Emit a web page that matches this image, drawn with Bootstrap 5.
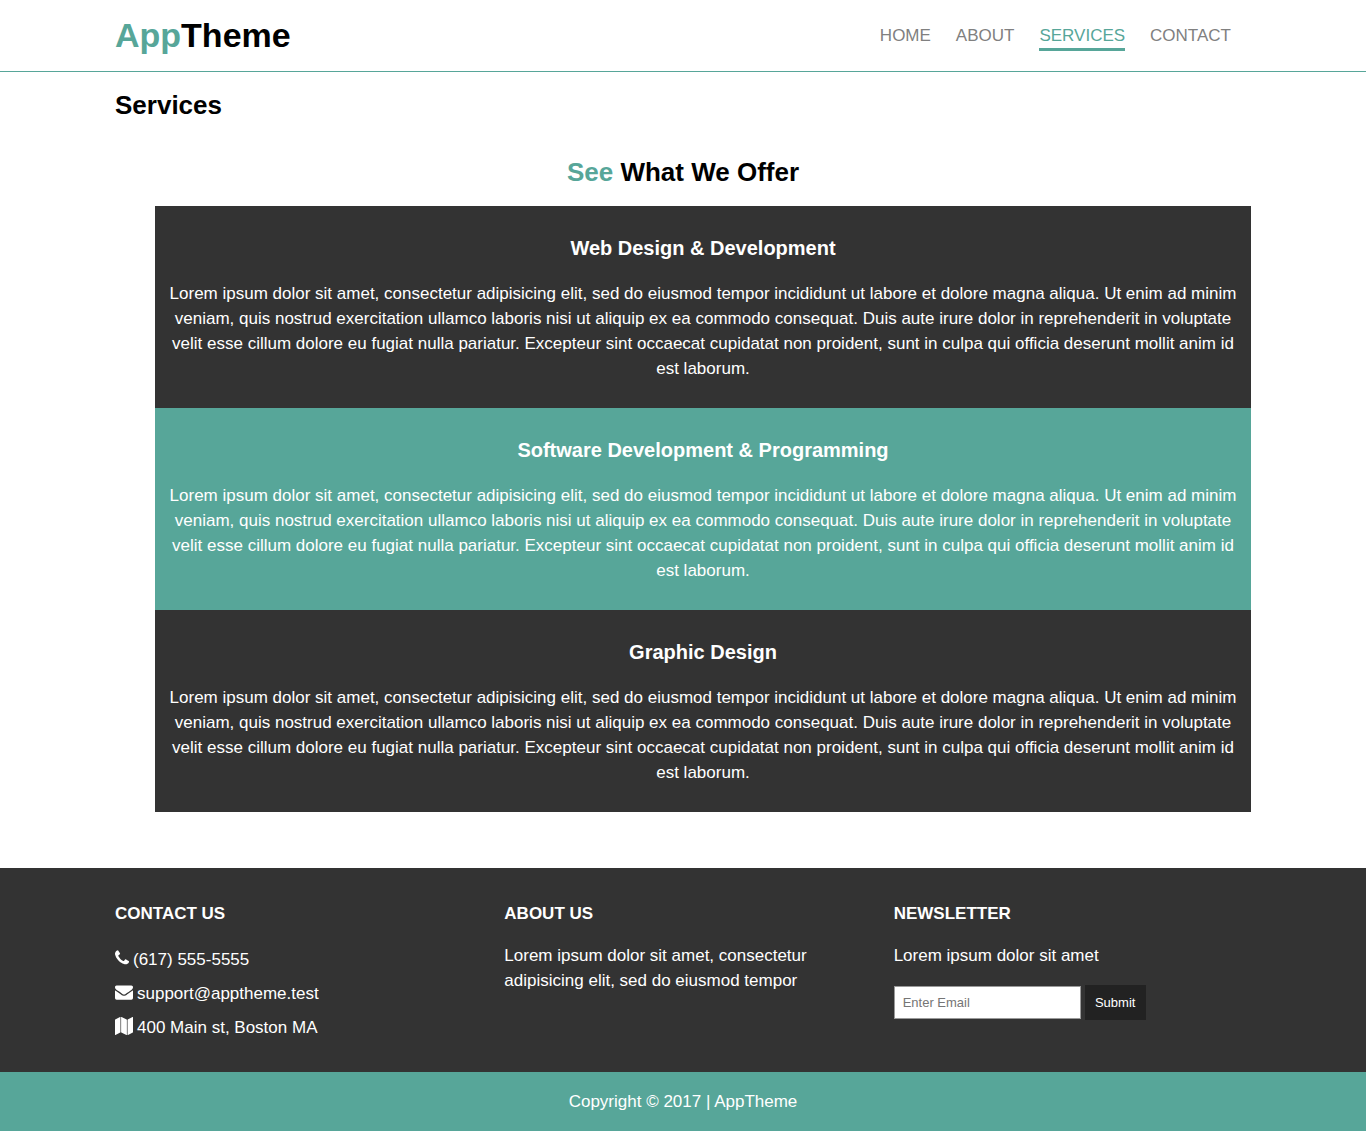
<!DOCTYPE html>
<html lang="en">
<head>
<meta charset="utf-8">
<meta name="viewport" content="width=device-width, initial-scale=1">
<title>AppTheme | Services</title>
<link href="https://cdn.jsdelivr.net/npm/bootstrap@5.3.0/dist/css/bootstrap.min.css" rel="stylesheet">
<style>
:root { --theme: #57a699; --dark: #333; }
body { font-family: "Liberation Sans", Arial, sans-serif; font-size: 17px; line-height: 25px; color: #000; }
.wrap { max-width: 1160px; padding-left: 12px; padding-right: 12px; }
.text-theme { color: var(--theme); }
.bg-theme { background: var(--theme); }
.bg-ink { background: var(--dark); }
.site-header { border-bottom: 1px solid var(--theme); padding: 10px 0; }
.brand { font-size: 34px; line-height: 51px; }
.brand, .heading { font-weight: 700; }
.menu { gap: 25px; padding-right: 20px; }
.menu .nav-link { padding: 0; color: #808080; border: solid transparent; border-width: 3px 0; text-transform: uppercase; }
.menu .nav-link:hover, .menu .nav-link.active { color: var(--theme); }
.menu .nav-link.active { border-bottom-color: var(--theme); }
.content { padding-top: 14px; padding-bottom: 56px; }
.heading { font-size: 26px; line-height: 39px; }
.page-title { margin-bottom: 28px; }
.offer-title { margin-bottom: 14px; }
.services { padding-left: 40px; }
.service { padding: 27px 14px; }
.service h3 { font-size: 20px; line-height: 30px; font-weight: 700; margin-bottom: 18px; }
.site-footer { padding: 33px 0 27px; }
.site-footer .row { --bs-gutter-x: 32px; }
.site-footer h4 { font-size: 17px; line-height: 25px; font-weight: 700; margin-bottom: 17px; text-transform: uppercase; }
.site-footer p, .signup-text { margin-bottom: 17px; }
.contacts li { gap: 4px; height: 34px; padding-bottom: 2px; }
.contacts svg { height: 18px; margin-bottom: 2px; fill: #fff; }
.signup { gap: 4px; }
.signup .form-control { width: 187px; height: 33px; padding: 0 8px; font-size: 13px; border: 1px solid #999; border-radius: 0; color: #000; }
.signup .form-control::placeholder { color: #757575; }
.signup .btn { height: 35px; min-width: 61px; padding: 0 10px; font-size: 13px; line-height: 20px; border: 0; border-radius: 0; background: #222; color: #fff; }
.copyright { padding: 17px 0; }
</style>
</head>
<body>
<header class="site-header">
  <div class="container-fluid wrap d-flex flex-wrap justify-content-between align-items-center">
    <h1 class="brand m-0"><span class="text-theme">App</span>Theme</h1>
    <nav aria-label="Main">
      <ul class="nav menu">
        <li class="nav-item"><a class="nav-link" href="#">Home</a></li>
        <li class="nav-item"><a class="nav-link" href="#">About</a></li>
        <li class="nav-item"><a class="nav-link active" aria-current="page" href="#">Services</a></li>
        <li class="nav-item"><a class="nav-link" href="#">Contact</a></li>
      </ul>
    </nav>
  </div>
</header>

<main class="container-fluid wrap content">
  <h2 class="heading page-title">Services</h2>
  <h2 class="heading offer-title text-center"><span class="text-theme">See</span> What We Offer</h2>
  <ul class="services list-unstyled text-center text-white m-0">
    <li class="service bg-ink">
      <h3>Web Design &amp; Development</h3>
      <p class="m-0">Lorem ipsum dolor sit amet, consectetur adipisicing elit, sed do eiusmod tempor incididunt ut labore et dolore magna aliqua. Ut enim ad minim veniam, quis nostrud exercitation ullamco laboris nisi ut aliquip ex ea commodo consequat. Duis aute irure dolor in reprehenderit in voluptate velit esse cillum dolore eu fugiat nulla pariatur. Excepteur sint occaecat cupidatat non proident, sunt in culpa qui officia deserunt mollit anim id est laborum.</p>
    </li>
    <li class="service bg-theme">
      <h3>Software Development &amp; Programming</h3>
      <p class="m-0">Lorem ipsum dolor sit amet, consectetur adipisicing elit, sed do eiusmod tempor incididunt ut labore et dolore magna aliqua. Ut enim ad minim veniam, quis nostrud exercitation ullamco laboris nisi ut aliquip ex ea commodo consequat. Duis aute irure dolor in reprehenderit in voluptate velit esse cillum dolore eu fugiat nulla pariatur. Excepteur sint occaecat cupidatat non proident, sunt in culpa qui officia deserunt mollit anim id est laborum.</p>
    </li>
    <li class="service bg-ink">
      <h3>Graphic Design</h3>
      <p class="m-0">Lorem ipsum dolor sit amet, consectetur adipisicing elit, sed do eiusmod tempor incididunt ut labore et dolore magna aliqua. Ut enim ad minim veniam, quis nostrud exercitation ullamco laboris nisi ut aliquip ex ea commodo consequat. Duis aute irure dolor in reprehenderit in voluptate velit esse cillum dolore eu fugiat nulla pariatur. Excepteur sint occaecat cupidatat non proident, sunt in culpa qui officia deserunt mollit anim id est laborum.</p>
    </li>
  </ul>
</main>

<footer class="text-white">
  <div class="site-footer bg-ink">
    <div class="container-fluid wrap">
      <div class="row">
        <section class="col-12 col-md-4">
          <h4>Contact Us</h4>
          <ul class="contacts list-unstyled m-0">
            <li class="d-flex align-items-center"><svg width="14" viewBox="192 0 1408 1792" aria-hidden="true"><path d="M1600 1240q0 27-10 70.500t-21 68.500q-21 50-122 106-94 51-186 51-27 0-53-3.500t-57.500-12.500-47-14.500-55.500-20.500-49-18q-98-35-175-83-127-79-264-216t-216-264q-48-77-83-175-3-9-18-49t-20.500-55.500-14.500-47-12.500-57.500-3.500-53q0-92 51-186 56-101 106-122 25-11 68.500-21t70.500-10q14 0 21 3 18 6 53 76 11 19 30 54t35 63.500 31 53.500q3 4 17.500 25t21.500 35.500 7 28.500q0 20-28.500 50t-62 55-62 53-28.500 46q0 9 5 22.500t8.500 20.500 14 24 11.500 19q76 137 174 235t235 174q2 1 19 11.500t24 14 20.500 8.500 22.500 5q18 0 46-28.500t53-62 55-62 50-28.500q14 0 28.500 7t35.500 21.500 25 17.500q25 15 53.500 31t63.500 35 54 30q70 35 76 53 3 7 3 21z"/></svg><span>(617) 555-5555</span></li>
            <li class="d-flex align-items-center"><svg width="18" viewBox="0 0 1792 1792" aria-hidden="true"><path d="M1792 710v794q0 66-47 113t-113 47h-1472q-66 0-113-47t-47-113v-794q44 49 101 87 362 246 497 345 57 42 92.500 65.500t94.500 48 110 24.500h2q51 0 110-24.500t94.500-48 92.500-65.500q170-123 498-345 57-39 100-87zm0-294q0 79-49 151t-122 123q-376 261-468 325-10 7-42.500 31t-54 38.800-52 33.200-57.500 27.500-50 9h-2q-23 0-50-9t-57.500-27.500-52-33.200-54-38.800-42.500-31q-91-64-262-182.500t-205-142.500q-62-42-117-115.500t-55-136.500q0-78 41.500-130t118.500-52h1472q65 0 112.500 47t47.500 113z"/></svg><span>support@apptheme.test</span></li>
            <li class="d-flex align-items-center"><svg width="18" viewBox="0 0 1792 1792" aria-hidden="true"><path d="M512 0q13 0 22.500 9.500t9.500 22.500v1472q0 20-17 28l-480 256q-7 4-15 4-13 0-22.500-9.500t-9.500-22.500v-1472q0-20 17-28l480-256q7-4 15-4zm1248 0q13 0 22.500 9.500t9.500 22.500v1472q0 20-17 28l-480 256q-7 4-15 4-13 0-22.500-9.500t-9.500-22.500v-1472q0-20 17-28l480-256q7-4 15-4zm-1120 0q8 0 14 3l512 256q18 10 18 29v1472q0 13-9.500 22.500t-22.500 9.500q-8 0-14-3l-512-256q-18-10-18-29v-1472q0-13 9.500-22.500t22.500-9.500z"/></svg><span>400 Main st, Boston MA</span></li>
          </ul>
        </section>
        <section class="col-12 col-md-4">
          <h4>About Us</h4>
          <p>Lorem ipsum dolor sit amet, consectetur adipisicing elit, sed do eiusmod tempor</p>
        </section>
        <section class="col-12 col-md-4">
          <h4>Newsletter</h4>
          <label class="signup-text d-block" for="email">Lorem ipsum dolor sit amet</label>
          <form class="signup d-flex align-items-center">
            <input class="form-control" type="email" id="email" placeholder="Enter Email">
            <button class="btn" type="submit">Submit</button>
          </form>
        </section>
      </div>
    </div>
  </div>
  <div class="copyright bg-theme text-center">Copyright &copy; 2017 | AppTheme</div>
</footer>
<script src="https://cdn.jsdelivr.net/npm/bootstrap@5.3.0/dist/js/bootstrap.bundle.min.js"></script>
</body>
</html>
